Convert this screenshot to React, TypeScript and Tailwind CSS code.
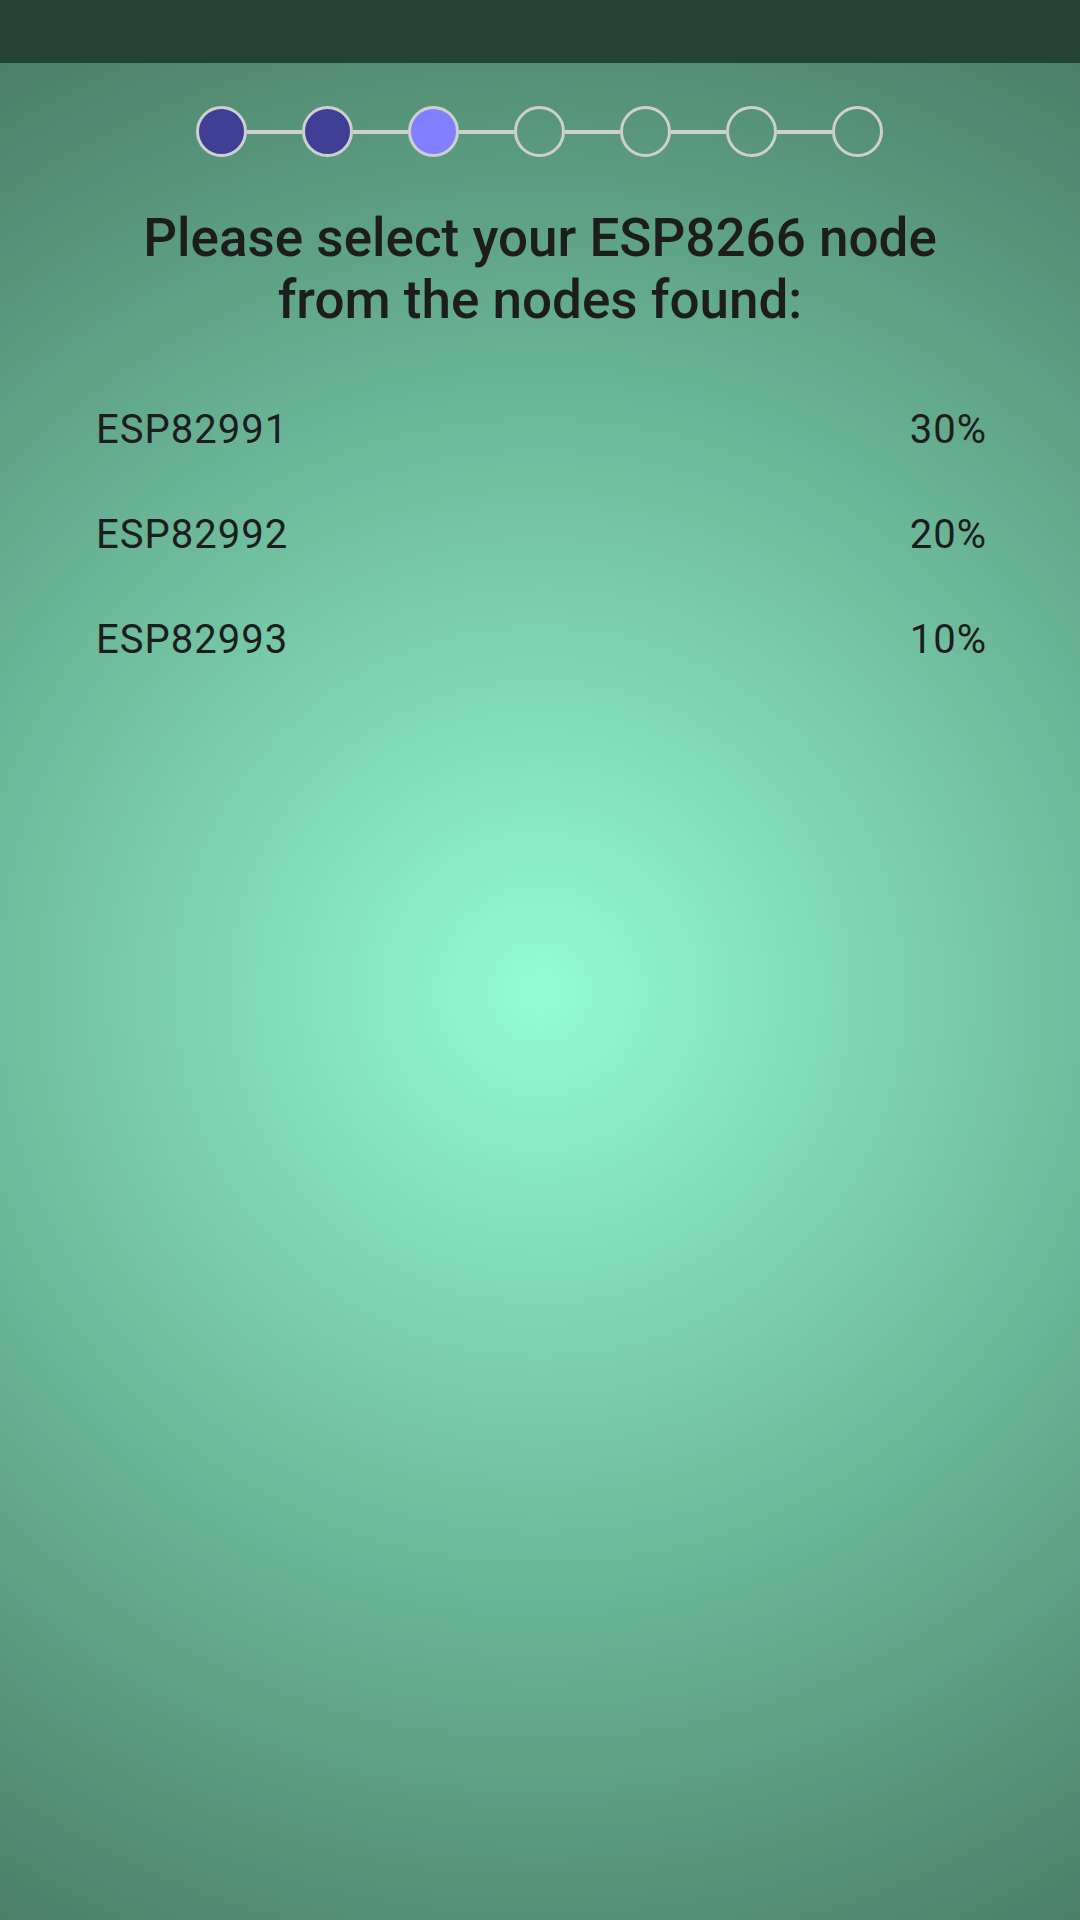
const steps = ['done', 'done', 'current', 'todo', 'todo', 'todo', 'todo'] as const;

const nodes = [
  { name: 'ESP82991', signal: '30%' },
  { name: 'ESP82992', signal: '20%' },
  { name: 'ESP82993', signal: '10%' },
];

function StepDot({ state }: { state: (typeof steps)[number] }) {
  const fill =
    state === 'done' ? 'bg-[#3f3f95]' : state === 'current' ? 'bg-[#8080ff]' : 'bg-transparent';
  return <div className={`w-[51px] h-[51px] rounded-full border-[3px] border-[#cfcfcf] ${fill}`} />;
}

export default function App() {
  return (
    <div className="h-[1920px] w-[1080px] flex flex-col font-['Roboto',sans-serif] text-[#1d1d1d]">
      <div className="h-[63px] bg-[#244236]" />
      <div className="flex-1 flex flex-col bg-[radial-gradient(circle_at_center,#94fcd4_0%,#4a7f68_100%)]">
        <div className="flex items-center justify-center pt-[43px] pr-[2px]">
          {steps.map((s, i) => (
            <div key={i} className="flex items-center">
              {i > 0 && <div className="w-[55px] h-[4px] bg-[#cfcfcf]" />}
              <StepDot state={s} />
            </div>
          ))}
        </div>
        <h1 className="mt-[50px] text-center text-[53px] leading-[62px] font-medium">
          Please select your ESP8266 node
          <br />
          from the nodes found:
        </h1>
        <ul className="mt-[75px] pl-[96px] pr-[94px] flex flex-col gap-[58px]">
          {nodes.map(n => (
            <li key={n.name} className="flex justify-between text-[40px] leading-[47px] tracking-[1px]">
              <span>{n.name}</span>
              <span className="mr-[-1px]">{n.signal}</span>
            </li>
          ))}
        </ul>
      </div>
    </div>
  );
}
